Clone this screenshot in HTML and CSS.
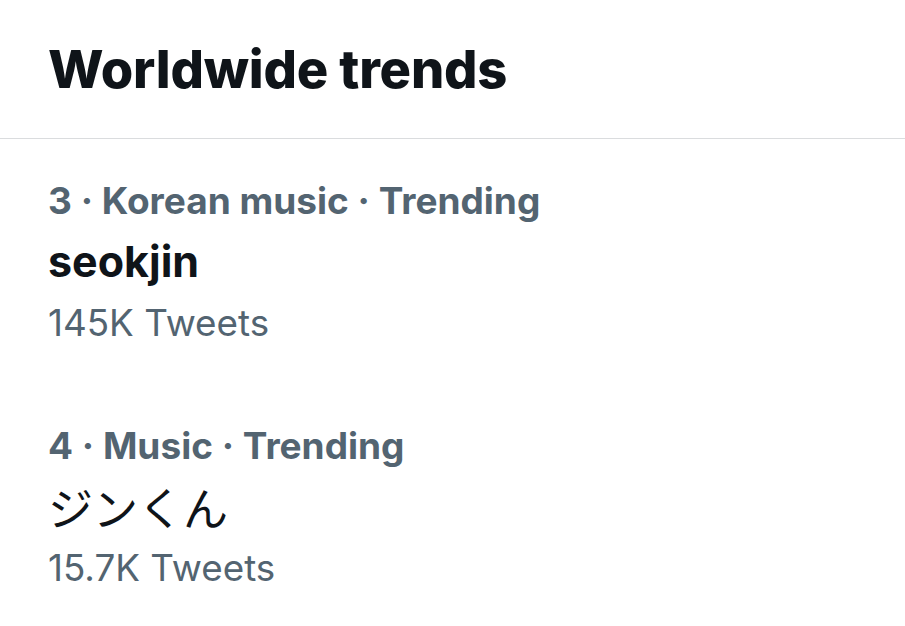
FILE: index.html
```html
<!DOCTYPE html>
<html lang="en">
<head>
<meta charset="utf-8">
<title>Worldwide trends</title>
<link rel="stylesheet" href="styles.css">
</head>
<body>
<div class="page">
  <header class="header">
    <h1 class="title">Worldwide trends</h1>
  </header>
  <section class="trends">
    <div class="trend">
      <div class="meta">3 · Korean music · Trending</div>
      <div class="name">seokjin</div>
      <div class="count">145K Tweets</div>
    </div>
    <div class="trend">
      <div class="meta">4 · Music · Trending</div>
      <div class="name jp">ジンくん</div>
      <div class="count">15.7K Tweets</div>
    </div>
  </section>
</div>
</body>
</html>
```
FILE: styles.css
```css
html, body {
  margin: 0;
  padding: 0;
  background: #ffffff;
}
body {
  font-family: Inter, "Noto Sans CJK JP", sans-serif;
  color: #0f1419;
  width: 905px;
  height: 626px;
  overflow: hidden;
}
.header {
  padding: 38px 48px 0;
  height: 100px;
  border-bottom: 1.5px solid #dadcde;
}
.title {
  margin: 0;
  font-size: 52.5px;
  font-weight: 800;
  line-height: 62px;
  letter-spacing: -0.2px;
}
.trends {
  display: flex;
  flex-direction: column;
}
.trend {
  padding: 31px 48px 31px;
}
.meta {
  font-size: 37px;
  font-weight: 700;
  color: #536471;
  line-height: 61px;
}
.name {
  font-size: 43px;
  font-weight: 700;
  line-height: 61px;
}
.name.jp {
  font-weight: 400;
  font-size: 45px;
  font-family: "Noto Sans CJK JP", sans-serif;
}
.count {
  font-size: 36.8px;
  font-weight: 400;
  color: #536471;
  line-height: 61px;
}
```
